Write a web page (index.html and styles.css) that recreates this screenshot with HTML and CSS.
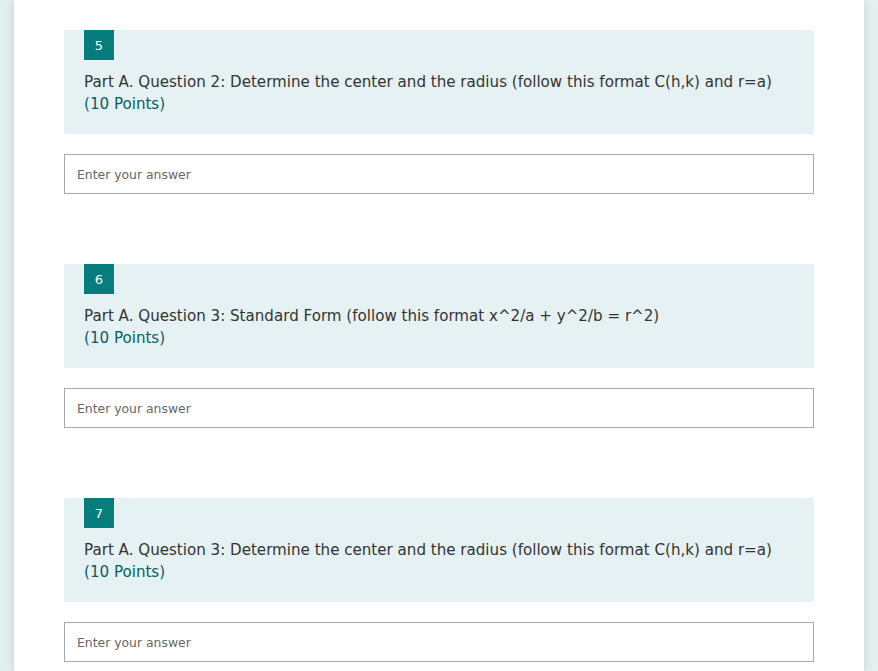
FILE: index.html
```html
<!DOCTYPE html>
<html lang="en">
<head>
<meta charset="utf-8">
<title>Form</title>
<link rel="stylesheet" href="styles.css">
</head>
<body>
<main class="card">
  <section class="question">
    <div class="q-head">
      <span class="badge">5</span>
      <div class="q-title">Part A. Question 2: Determine the center and the radius (follow this format C(h,k) and r=a)</div>
      <div class="q-points">(10 Points)</div>
    </div>
    <div class="answer"><input class="answer-input" type="text" placeholder="Enter your answer"></div>
  </section>
  <section class="question">
    <div class="q-head">
      <span class="badge">6</span>
      <div class="q-title">Part A. Question 3: Standard Form (follow this format x^2/a + y^2/b = r^2)</div>
      <div class="q-points">(10 Points)</div>
    </div>
    <div class="answer"><input class="answer-input" type="text" placeholder="Enter your answer"></div>
  </section>
  <section class="question">
    <div class="q-head">
      <span class="badge">7</span>
      <div class="q-title">Part A. Question 3: Determine the center and the radius (follow this format C(h,k) and r=a)</div>
      <div class="q-points">(10 Points)</div>
    </div>
    <div class="answer"><input class="answer-input" type="text" placeholder="Enter your answer"></div>
  </section>
</main>
</body>
</html>
```

FILE: styles.css
```css
html, body {
  margin: 0;
  padding: 0;
}
body {
  background: #e3eff1;
  font-family: "DejaVu Sans", sans-serif;
  height: 671px;
  overflow: hidden;
}
.card {
  margin-left: 14px;
  width: 850px;
  min-height: 671px;
  background: #ffffff;
  box-shadow: 0 0 8px rgba(120, 160, 165, 0.35);
  padding: 30px 50px 0;
  box-sizing: border-box;
  display: flex;
  flex-direction: column;
  gap: 70px;
}
.question {
  display: flex;
  flex-direction: column;
  gap: 20px;
}
.q-head {
  background: #e6f1f3;
  padding: 0 20px 19px;
  display: flex;
  flex-direction: column;
  align-items: flex-start;
}
.badge {
  width: 30px;
  height: 30px;
  background: #077c7d;
  color: #ffffff;
  font-size: 13px;
  display: flex;
  align-items: center;
  justify-content: center;
  margin-bottom: 11px;
}
.q-title {
  font-size: 15.1px;
  line-height: 22px;
  color: #333333;
}
.q-points {
  font-size: 15.1px;
  line-height: 22px;
  color: #075e5f;
}
.answer {
  display: flex;
}
.answer-input {
  flex: 1;
  height: 40px;
  box-sizing: border-box;
  border: 1px solid #a8a8a8;
  padding: 0 12px;
  margin: 0;
  font-family: inherit;
  font-size: 12.4px;
  color: #333;
  background: #fff;
  outline: none;
}
.answer-input::placeholder {
  color: #666666;
  opacity: 1;
}
```
